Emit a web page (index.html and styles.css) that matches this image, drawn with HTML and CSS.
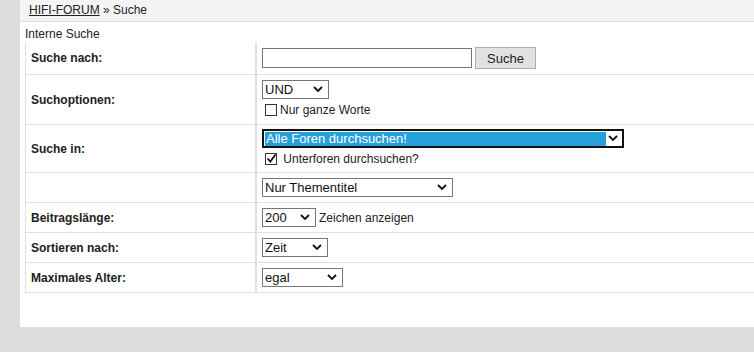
FILE: index.html
```html
<!DOCTYPE html>
<html>
    <head>
        <meta charset="utf-8">
        <title>Suche - HIFI-FORUM</title>
        <link rel="stylesheet" href="styles.css">
    </head>
    <body>
        <div class="page">
            <div class="crumbs"><a href="#">HIFI-FORUM</a> &raquo; Suche</div>
            <div class="caption">Interne Suche</div>
            <div class="search">
                <div class="row h33">
                    <div class="lbl">Suche nach:</div>
                    <div class="val mid"><input type="text" class="txt"><button class="btn">Suche</button></div>
                </div>
                <div class="row h50">
                    <div class="lbl">Suchoptionen:</div>
                    <div class="val top5">
                        <select class="sel w-und"><option>UND</option></select>
                        <label class="chk"><span class="box"></span>Nur ganze Worte</label>
                    </div>
                </div>
                <div class="row h48">
                    <div class="lbl">Suche in:</div>
                    <div class="val top4">
                        <span class="sel focus w-forum"><span class="hl">Alle Foren durchsuchen!</span></span>
                        <label class="chk"><span class="box"><svg width="11" height="11" viewBox="0 0 11 11"><path d="M1.5 5.5 L4.3 8.5 L9.5 1.5" fill="none" stroke="#111" stroke-width="1.8"/></svg></span>&nbsp;Unterforen durchsuchen?</label>
                    </div>
                </div>
                <div class="row h30">
                    <div class="lbl"></div>
                    <div class="val mid"><select class="sel w-title"><option>Nur Thementitel</option></select></div>
                </div>
                <div class="row h30">
                    <div class="lbl">Beitragsl&auml;nge:</div>
                    <div class="val mid"><select class="sel w-200"><option>200</option></select><span class="after">Zeichen anzeigen</span></div>
                </div>
                <div class="row h30">
                    <div class="lbl">Sortieren nach:</div>
                    <div class="val mid"><select class="sel w-zeit"><option>Zeit</option></select></div>
                </div>
                <div class="row h30">
                    <div class="lbl">Maximales Alter:</div>
                    <div class="val mid"><select class="sel w-egal"><option>egal</option></select></div>
                </div>
            </div>
        </div>
    </body>
</html>
```
FILE: styles.css
```css
body{
    margin: 0;
    background: #dcdcdc;
    font-family: "Liberation Sans", Arial, sans-serif;
    font-size: 12px;
    color: #222;
}
.page{
    margin-left: 20px;
    background: #fff;
    height: 327px;
    overflow: hidden;
}
.crumbs{
    height: 21px;
    line-height: 21px;
    padding-left: 9px;
    background: #f4f4f4;
    border-bottom: 1px solid #dedede;
    color: #222;
}
.crumbs a{
    color: #222;
    text-decoration: underline;
}
.caption{
    margin: 5px 0 0 5px;
    height: 15px;
    line-height: 15px;
}
.search{
    margin: 0 0 0 5px;
}
.row{
    display: grid;
    grid-template-columns: 232px 1fr;
    box-sizing: border-box;
    border-bottom: 1px solid #e0e0e0;
}
.h33{ height: 33px; }
.h50{ height: 50px; }
.h48{ height: 48px; }
.h30{ height: 30px; }
.lbl{
    display: flex;
    align-items: center;
    padding-left: 5px;
    border-left: 1px solid #e0e0e0;
    border-right: 2px solid #e0e0e0;
    font-weight: bold;
}
.val{
    padding-left: 5px;
}
.mid{
    display: flex;
    align-items: center;
}
.top5{ padding-top: 5px; }
.top4{ padding-top: 4px; }
.txt{
    box-sizing: border-box;
    width: 210px;
    height: 20px;
    margin: 0 3px 0 0;
    padding: 1px 2px;
    border: 1px solid #767676;
}
.btn{
    box-sizing: border-box;
    margin: 0;
    width: 61px;
    height: 22px;
    border: 1px solid #adadad;
    background: #e1e1e1;
    font-family: "Liberation Sans", Arial, sans-serif;
    font-size: 13px;
    color: #222;
}
.sel{
    -webkit-appearance: none;
    appearance: none;
    display: block;
    box-sizing: border-box;
    height: 19px;
    margin: 0;
    padding: 0 0 0 2px;
    border: 1px solid #767676;
    border-radius: 0;
    background: #fff url("data:image/svg+xml;utf8,<svg xmlns='http://www.w3.org/2000/svg' width='10' height='7' viewBox='0 0 10 7'><path d='M1 1 L5 5 L9 1' fill='none' stroke='%23111' stroke-width='1.8'/></svg>") no-repeat right 5px center;
    font-family: "Liberation Sans", Arial, sans-serif;
    font-size: 13px;
    line-height: 17px;
    color: #111;
}
.w-und{ width: 67px; }
.w-forum{ width: 362px; }
.w-title{ width: 191px; }
.w-200{ width: 54px; }
.w-zeit{ width: 66px; }
.w-egal{ width: 81px; }
.after{
    margin-left: 3px;
}
.focus{
    border: 2px solid #111;
    padding: 1px;
    background-position: right 4px center;
}
.hl{
    display: block;
    width: 340px;
    height: 14px;
    line-height: 14px;
    background: #26a0da;
    color: #fff;
    padding-left: 1px;
}
.chk{
    display: flex;
    align-items: center;
    margin: 4px 0 0 3px;
    height: 13px;
}
.box{
    display: inline-block;
    box-sizing: border-box;
    width: 12px;
    height: 12px;
    margin-right: 3px;
    border: 1px solid #333;
    background: #fff;
    position: relative;
}
.box svg{
    position: absolute;
    left: 0;
    top: -1px;
}
```
